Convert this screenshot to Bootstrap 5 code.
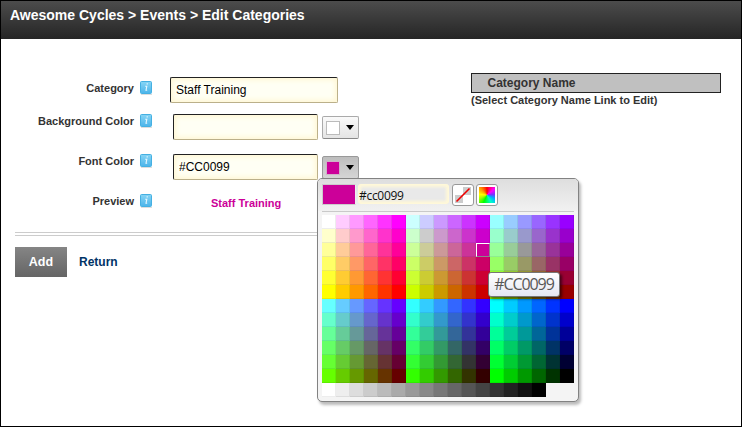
<!DOCTYPE html>
<html lang="en">
<head>
<meta charset="utf-8">
<title>Edit Categories</title>
<link href="https://cdn.jsdelivr.net/npm/bootstrap@5.3.0/dist/css/bootstrap.min.css" rel="stylesheet">
<style>
body{font:11px/14px "Liberation Sans",Arial,sans-serif;color:#333;background:#fff}
.page{width:742px;height:427px;border:1px solid #000}
.page-bar{height:38px;background:linear-gradient(#4c4c4c,#252525);padding:6px 0 0 9px;color:#fff;font-size:14px;line-height:17px}
.form-side{width:435px;margin-left:14px;padding-top:38px}
.f-row{height:40px}
.f-first{height:37px}
.f-label{width:119px;line-height:14px}
.info{width:13px;height:15px;margin-left:6px}
.field{height:26px;border:1px solid;border-color:#222 #bbb08a #bbb08a #222;border-radius:2px;background:#fffff4;box-shadow:inset 0 0 5px 2px #fff7d4;color:#000;font-size:12px;padding:0 5px;outline:0}
.field-a{width:168px;margin-left:17px}
.field-b{width:145px;margin-left:20px}
.pick{width:37px;height:23px;margin:2px 0 0 4px;border:1px solid #aaa;border-bottom-color:#888;border-radius:2px;background:linear-gradient(#fafafa,#e4e4e4);padding:0 4px 0 3px}
.pick.open{background:linear-gradient(#bdbdbd,#d5d5d5);border-color:#999}
.chip{width:14px;height:14px;border:1px solid #bbb;background:#fff}
.open .chip{background:#c09;border-color:#d0b0c8}
.preview{margin:2px 0 0 58px;color:#c09}
.rule{height:4px;border:solid #ccc;border-width:1px 0;margin:-2px 0 11px}
.btn-add{width:52px;height:30px;border:0;border-radius:0;padding:0;background:linear-gradient(#858585,#656565);color:#fff;font:bold 12.5px "Liberation Sans",Arial,sans-serif}
.ret{color:#003366;font-size:12px;margin-left:12px}
.cat-side{width:250px;margin:34px 0 0 21px}
.cat-head{height:20px;border:1px solid #222;background:#c0c0c0;font-size:12px;line-height:18px;padding-left:15.5px}
.picker{left:317px;top:178px;width:262px;height:224px;border:1px solid #828282;border-radius:5px;background:#f4f4f4;box-shadow:2px 3px 3px rgba(0,0,0,.27);padding:0 4px}
.picker-top{height:32px;margin:0 -4px;padding:5px 4px 0;background:linear-gradient(#dedede,#f1f1f1);border-radius:4px 4px 0 0}
.current{width:34px;height:21px;background:#c09;border:1px solid #ccc;border-right-color:#eee}
.hex{width:91px;height:20px;margin-left:2px;border:0;border-radius:3px;background:#e9e9e9;box-shadow:inset 0 0 3px 3px #fff8d8;color:#111;font:12px "Open Sans","Noto Sans",sans-serif;letter-spacing:-.3px;padding:3px 0 0 1px}
.tool{width:22px;height:22px;border:1px solid #999;border-radius:3px;background:#fff;padding:2px}
.tool-none{margin-left:3px}
.tool-custom{margin-left:2px}
.wheel{width:16px;height:16px;background:conic-gradient(red,#f0f 50deg,#73f 85deg,#0af 115deg,#0fc 150deg,#0f0 205deg,#af0 245deg,#ff0 275deg,#f90 315deg,red)}
.line{height:4px;border-top:1px solid #c9c9c9}
.swatches{display:grid;grid-template-columns:repeat(18,14px);grid-auto-rows:14px}
.sw{box-shadow:inset -1px -1px 0 rgba(0,0,0,.07)}
.sw.on{border:1px solid #fff;border-color:#fff #888 #888 #fff;box-shadow:none}
.tip{left:488px;top:272px;width:72px;height:25px;border:1px solid #767676;border-radius:3px;background:linear-gradient(#fff,#e6e7f1);box-shadow:2px 2px 3px rgba(0,0,0,.55);color:#575757;font:16px/23px "Open Sans","Noto Sans",sans-serif;letter-spacing:-1.1px}
</style>
</head>
<body>
<div class="page position-relative overflow-hidden">
  <header class="page-bar fw-bold">Awesome Cycles &gt; Events &gt; Edit Categories</header>
  <main class="d-flex align-items-start">
    <form class="form-side">
      <div class="f-row f-first d-flex align-items-start">
        <label class="f-label text-end fw-bold mt-1">Category</label>
        <svg class="info mt-1" viewBox="0 0 13 15"><use href="#info"/></svg>
        <input class="field field-a" value="Staff Training">
      </div>
      <div class="f-row d-flex align-items-start">
        <label class="f-label text-end fw-bold">Background Color</label>
        <svg class="info" viewBox="0 0 13 15"><use href="#info"/></svg>
        <input class="field field-b">
        <button type="button" class="pick d-flex align-items-center justify-content-between"><span class="chip"></span><svg width="8" height="5" viewBox="0 0 8 5"><path d="M0 0h8L4 5z"/></svg></button>
      </div>
      <div class="f-row d-flex align-items-start">
        <label class="f-label text-end fw-bold">Font Color</label>
        <svg class="info" viewBox="0 0 13 15"><use href="#info"/></svg>
        <input class="field field-b" value="#CC0099">
        <button type="button" class="pick open d-flex align-items-center justify-content-between"><span class="chip"></span><svg width="8" height="5" viewBox="0 0 8 5"><path d="M0 0h8L4 5z"/></svg></button>
      </div>
      <div class="f-row d-flex align-items-start">
        <label class="f-label text-end fw-bold">Preview</label>
        <svg class="info" viewBox="0 0 13 15"><use href="#info"/></svg>
        <span class="fw-bold preview">Staff Training</span>
      </div>
      <div class="rule"></div>
      <div class="d-flex align-items-center"><button type="button" class="btn btn-add">Add</button><a class="ret fw-bold text-decoration-none" href="#">Return</a></div>
    </form>
    <aside class="cat-side">
      <div class="cat-head fw-bold">Category Name</div>
      <div class="fw-bold">(Select Category Name Link to Edit)</div>
    </aside>
  </main>
</div>
<div class="picker position-absolute">
  <div class="picker-top d-flex align-items-start">
    <div class="current"></div>
    <input class="hex" value="#cc0099">
    <div class="tool tool-none"><svg class="d-block" width="16" height="16" viewBox="0 0 16 16"><path fill="#fff" d="M0 0h16v16H0z"/><path fill="#ccc" d="M8 0h8v8H8zM0 8h8v8H0z"/><path stroke="#e00" stroke-width="1.6" d="M1.5 14.5L14.5 1.5"/></svg></div>
    <div class="tool tool-custom"><div class="wheel"></div></div>
  </div>
  <div class="line"></div>
  <div class="swatches" id="swatches"></div>
</div>
<div class="tip position-absolute text-center">#CC0099</div>
<svg width="0" height="0" class="position-absolute"><defs>
  <linearGradient id="blue" x2="0" y2="1"><stop stop-color="#87d5f5"/><stop offset="1" stop-color="#4bb4ea"/></linearGradient>
  <g id="info"><path d="M1 13.5h11" stroke="#ddd"/><rect x=".5" y=".5" width="11" height="12" rx="1" fill="url(#blue)" stroke="#45b0e2"/><path d="M6.6 2.9h1.2M5.2 5.3h1.6L6 9.2h1.2" fill="none" stroke="#e8f8ff" stroke-width="1.1"/></g>
</defs></svg>
<script src="https://cdn.jsdelivr.net/npm/bootstrap@5.3.0/dist/js/bootstrap.bundle.min.js"></script>
<script>
// Web-safe cube: three red levels per band, green across, blue down; greys follow.
const grid = document.getElementById('swatches');
const steps = [255, 204, 153, 102, 51, 0];
function add(r, g, b) {
  const cell = document.createElement('div');
  cell.className = 'sw' + (r === 204 && g === 0 && b === 153 ? ' on' : '');
  cell.style.background = `rgb(${r},${g},${b})`;
  grid.append(cell);
}
for (let half = 0; half < 2; half++)
  for (const b of steps)
    for (let k = 0; k < 3; k++)
      for (const g of steps) add(steps[half * 3 + k], g, b);
for (let i = 15; i >= 0; i--) add(i * 17, i * 17, i * 17);
</script>
</body>
</html>
